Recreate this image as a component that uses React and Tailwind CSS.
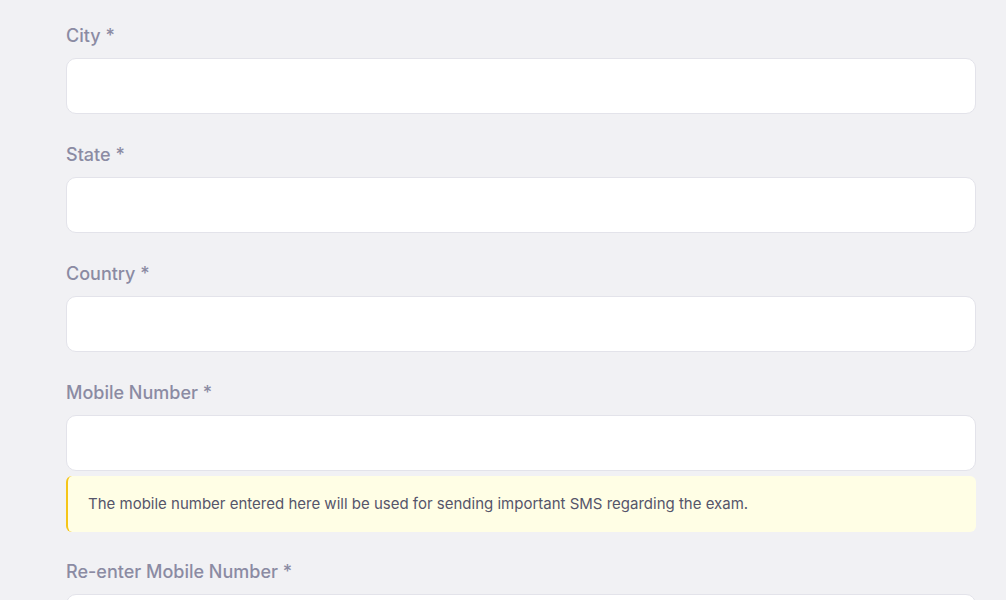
export default function App() {
  const fields = ["City", "State", "Country"];
  const Field = ({ label, children }) => (
    <div className="flex flex-col">
      <label className="h-6 leading-6 text-[18px] font-medium text-[#8b8ba3]">{label} *</label>
      <div className="mt-[10px] h-14 rounded-[10px] border border-[#e3e3ea] bg-white"></div>
      {children}
    </div>
  );
  return (
    <div className="min-h-[600px] h-[600px] overflow-hidden bg-[#f1f1f4] font-['Inter',sans-serif]">
      <div className="ml-[66px] w-[910px] pt-[24px] flex flex-col gap-[29px]">
        {fields.map((f) => (
          <Field key={f} label={f} />
        ))}
        <Field label="Mobile Number">
          <div className="mt-[5px] mb-[-1px] h-14 flex items-center rounded-[6px] border-l-2 border-[#f5c518] bg-[#fffee5] pl-[20px] text-[15px] text-[#55556a]">
            The mobile number entered here will be used for sending important SMS regarding the exam.
          </div>
        </Field>
        <Field label="Re-enter Mobile Number" />
      </div>
    </div>
  );
}
